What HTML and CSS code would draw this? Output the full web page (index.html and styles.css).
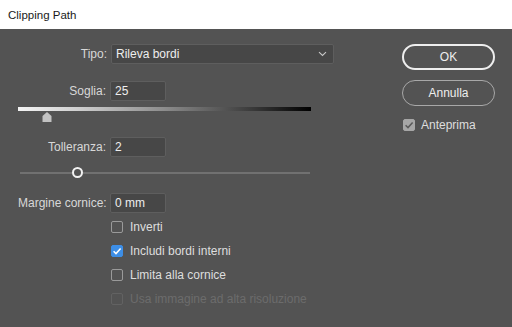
FILE: index.html
```html
<!DOCTYPE html>
<html>
<head>
<meta charset="utf-8">
<link rel="stylesheet" href="styles.css">
</head>
<body>
<div class="titlebar">Clipping Path</div>
<div class="dialog">
  <div class="left">
    <div class="row row-tipo">
      <label class="lbl">Tipo:</label>
      <div class="select"><span>Rileva bordi</span>
        <svg class="chev" width="9" height="6" viewBox="0 0 9 6"><path d="M1 1.2 L4.5 4.5 L8 1.2" fill="none" stroke="#c8c8c8" stroke-width="1.1"/></svg>
      </div>
    </div>
    <div class="row row-soglia">
      <label class="lbl">Soglia:</label>
      <div class="input">25</div>
    </div>
    <div class="grad-slider">
      <div class="grad"></div>
      <svg class="tri" width="10" height="10" viewBox="0 0 10 10"><path d="M0.5 4 L5 0 L9.5 4 L9.5 10 L0.5 10 Z" fill="#c2c2c2"/></svg>
    </div>
    <div class="row row-toll">
      <label class="lbl">Tolleranza:</label>
      <div class="input">2</div>
    </div>
    <div class="line-slider">
      <div class="line"></div>
      <div class="knob"></div>
    </div>
    <div class="row row-marg">
      <label class="lbl">Margine cornice:</label>
      <div class="input">0 mm</div>
    </div>
    <div class="checks">
      <div class="check"><span class="box"></span><span>Inverti</span></div>
      <div class="check"><span class="box on"><svg width="12" height="12" viewBox="0 0 12 12"><path d="M2.6 6.2 L5 8.6 L9.6 3.4" fill="none" stroke="#fff" stroke-width="1.5"/></svg></span><span>Includi bordi interni</span></div>
      <div class="check"><span class="box"></span><span>Limita alla cornice</span></div>
      <div class="check disabled"><span class="box"></span><span>Usa immagine ad alta risoluzione</span></div>
    </div>
  </div>
  <div class="right">
    <div class="btn primary">OK</div>
    <div class="btn">Annulla</div>
    <div class="check preview"><span class="box gray"><svg width="12" height="12" viewBox="0 0 12 12"><path d="M2.6 6.2 L5 8.6 L9.6 3.4" fill="none" stroke="#5a5a5a" stroke-width="1.5"/></svg></span><span>Anteprima</span></div>
  </div>
</div>
</body>
</html>
```
FILE: styles.css
```css
html, body {
  margin: 0;
  padding: 0;
}
body {
  width: 512px;
  height: 327px;
  background: #535353;
  font-family: "Liberation Sans", Arial, sans-serif;
  font-size: 12px;
  color: #dcdcdc;
  overflow: hidden;
}
.titlebar {
  height: 29px;
  background: #ffffff;
  color: #1a1a1a;
  font-size: 11.5px;
  line-height: 30px;
  padding-left: 8px;
  box-sizing: border-box;
}
.dialog {
  display: flex;
}
.left {
  width: 380px;
  padding-left: 18px;
  box-sizing: border-box;
}
.row {
  display: flex;
  align-items: center;
  height: 20px;
}
.lbl {
  width: 92px;
  text-align: right;
  padding-right: 4px;
  box-sizing: border-box;
  color: #d8d8d8;
  white-space: nowrap;
}
.row-tipo { margin-top: 15px; }
.row-tipo .lbl { width: 93px; }
.row-soglia { margin-top: 17px; }
.row-toll { margin-top: 10px; }
.row-marg { margin-top: 15px; }
.select {
  width: 223px;
  height: 20px;
  box-sizing: border-box;
  background: #474747;
  border: 1px solid #5e5e5e;
  border-radius: 2px;
  display: flex;
  align-items: center;
  justify-content: space-between;
  padding: 0 6px 0 4px;
  color: #eeeeee;
}
.input {
  width: 56px;
  height: 20px;
  box-sizing: border-box;
  background: #474747;
  border: 1px solid #5e5e5e;
  border-radius: 2px;
  padding-left: 4px;
  line-height: 18px;
  color: #eeeeee;
}
.grad-slider {
  position: relative;
  margin-top: 6px;
  height: 20px;
  width: 293px;
}
.grad {
  height: 4px;
  background: linear-gradient(to right, #f4f4f4 0%, #d0d0d0 20%, #8c8c8c 50%, #3a3a3a 80%, #000000 100%);
}
.tri {
  position: absolute;
  left: 24px;
  top: 5px;
}
.line-slider {
  position: relative;
  margin-top: 10px;
  margin-left: 2px;
  width: 290px;
  height: 11px;
}
.line {
  position: absolute;
  left: 0;
  right: 0;
  top: 5px;
  height: 1.5px;
  background: #717171;
}
.knob {
  position: absolute;
  left: 52px;
  top: 0;
  width: 11px;
  height: 11px;
  box-sizing: border-box;
  border: 2px solid #f2f2f2;
  border-radius: 50%;
  background: #535353;
}
.checks {
  margin-top: 2px;
  padding-left: 93px;
}
.check {
  display: flex;
  align-items: center;
  height: 24px;
  gap: 7px;
  color: #dedede;
}
.box {
  width: 12px;
  height: 12px;
  box-sizing: border-box;
  border: 1px solid #9a9a9a;
  border-radius: 2px;
  display: inline-flex;
}
.box.on {
  background: #3d8ee6;
  border-color: #3d8ee6;
}
.box.gray {
  background: #a6a6a6;
  border-color: #a6a6a6;
}
.box svg {
  margin: -1px;
}
.check.disabled {
  color: #6c6c6c;
}
.check.disabled .box {
  border-color: #626262;
}
.right {
  padding-top: 15px;
  padding-left: 22px;
}
.btn {
  width: 93px;
  height: 26px;
  box-sizing: border-box;
  border: 1px solid #a8a8a8;
  border-radius: 13px;
  text-align: center;
  line-height: 24px;
  color: #eeeeee;
  margin-bottom: 10px;
}
.btn.primary {
  border: 2px solid #eeeeee;
  line-height: 22px;
}
.preview {
  margin-left: 1px;
  margin-top: -3px;
  gap: 6px;
}
```
